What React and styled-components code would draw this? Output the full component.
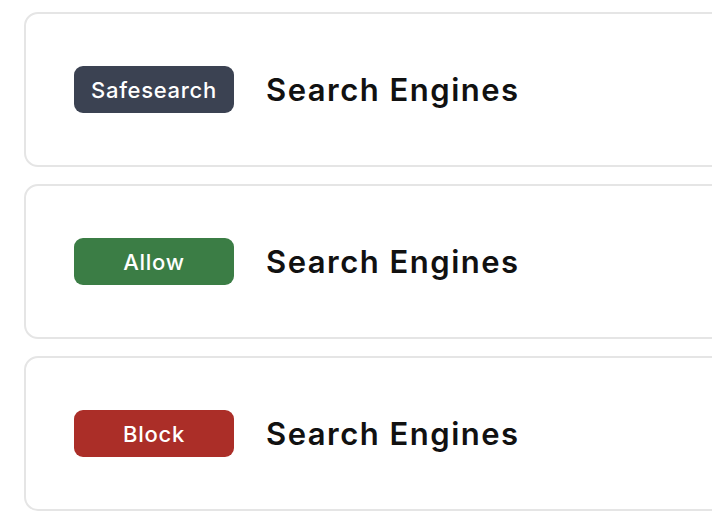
import React from 'react';
import styled, { createGlobalStyle } from 'styled-components';

const GlobalStyle = createGlobalStyle`
  html, body {
    margin: 0;
    padding: 0;
    background: #ffffff;
    overflow: hidden;
  }
  body {
    font-family: Inter, "Noto Sans", "Liberation Sans", sans-serif;
  }
`;

const Page = styled.div`
  display: flex;
  flex-direction: column;
  gap: 17px;
  padding: 12px 0 0 24px;
  width: 760px;
`;

const Card = styled.div`
  display: flex;
  align-items: center;
  gap: 32px;
  height: 151px;
  padding: 0 0 0 48px;
  border: 2px solid #e5e5e5;
  border-radius: 14px;
  background: #fff;
`;

const COLORS = {
  safesearch: '#3b4252',
  allow: '#3b7d45',
  block: '#ab2e28',
};

const Badge = styled.span`
  display: flex;
  align-items: center;
  justify-content: center;
  width: 160px;
  height: 47px;
  border-radius: 9px;
  background: ${p => COLORS[p.kind]};
  color: #fff;
  font-size: 22px;
  font-weight: 500;
  letter-spacing: 0.7px;
`;

const Title = styled.h2`
  margin: 0;
  font-size: 31px;
  font-weight: 600;
  color: #111;
  letter-spacing: 1.5px;
`;

const rows = [
  { kind: 'safesearch', label: 'Safesearch' },
  { kind: 'allow', label: 'Allow' },
  { kind: 'block', label: 'Block' },
];

export default function App() {
  return (
    <>
      <GlobalStyle />
      <Page>
        {rows.map(r => (
          <Card key={r.kind}>
            <Badge kind={r.kind}>{r.label}</Badge>
            <Title>Search Engines</Title>
          </Card>
        ))}
      </Page>
    </>
  );
}
